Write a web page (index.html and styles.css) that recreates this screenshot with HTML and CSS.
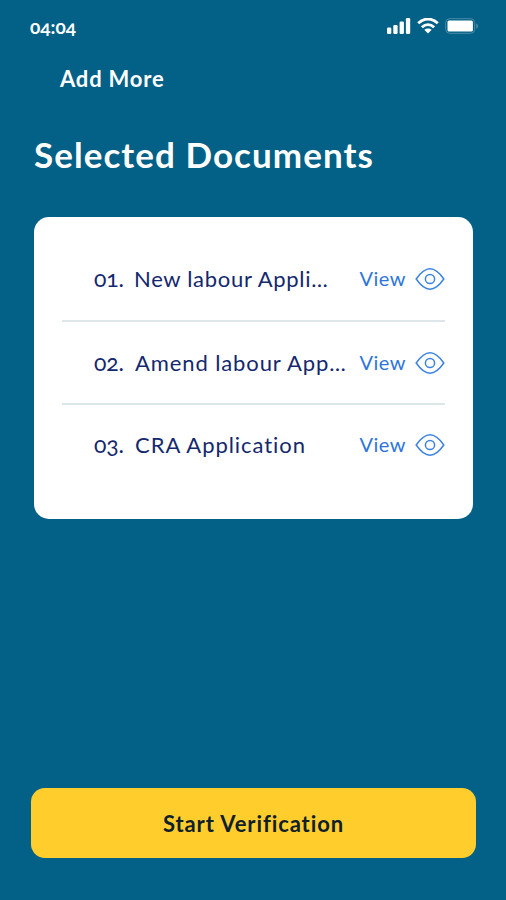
FILE: index.html
```html
<!DOCTYPE html>
<html lang="en">

	<head>
		<meta charset="UTF-8">
		<title>Selected Documents</title>
		<link rel="stylesheet" href="styles.css">
	</head>

	<body>
		<svg class="sprite" aria-hidden="true">
			<symbol id="eye" viewBox="0 0 30 24">
				<path d="M1.200 12C5.500 5.800 9.500 1.800 15 1.800s9.500 4 13.800 10.200C24.500 18.200 20.500 22.200 15 22.200S5.500 18.200 1.200 12z" />
				<circle cx="15" cy="12" r="4.600" />
			</symbol>
		</svg>

		<header class="status">
			<span class="time">04:04</span>
			<div class="status-icons">
				<svg class="signal" viewBox="0 0 24 16">
					<rect x="0" y="9.500" width="4.300" height="6.500" rx="1.200" />
					<rect x="6.300" y="7" width="4.300" height="9" rx="1.200" />
					<rect x="12.600" y="3.600" width="4.300" height="12.400" rx="1.200" />
					<rect x="18.900" y="0" width="4.300" height="16" rx="1.200" />
				</svg>
				<svg class="wifi" viewBox="0 0 22 16">
					<path class="arc" d="M1.200 5.300C7-0.300 15-0.300 20.800 5.300" />
					<path class="arc" d="M4.900 9.200C8.500 5.800 13.500 5.800 17.100 9.200" />
					<path d="M7.300 11.800c2.200-1.900 5.200-1.900 7.400 0L11 15.600z" />
				</svg>
				<svg class="battery" viewBox="0 0 34 16">
					<rect class="shell" x="0.700" y="0.700" width="29" height="14.600" rx="4" />
					<rect x="2.500" y="2.500" width="25.400" height="11" rx="1.500" />
					<path class="cap" d="M31.200 5.400c2.400 0.800 2.400 4.400 0 5.200z" />
				</svg>
			</div>
		</header>

		<a class="add-more">Add More</a>
		<h1>Selected Documents</h1>

		<ul class="card">
			<li>
				<span class="num">01.</span>
				<span class="name name-new">New labour Appli…</span>
				<a class="view"><span>View</span> <svg><use href="#eye" /></svg></a>
			</li>
			<li>
				<span class="num">02.</span>
				<span class="name name-amend">Amend labour App…</span>
				<a class="view"><span>View</span> <svg><use href="#eye" /></svg></a>
			</li>
			<li>
				<span class="num">03.</span>
				<span class="name name-cra">CRA Application</span>
				<a class="view"><span>View</span> <svg><use href="#eye" /></svg></a>
			</li>
		</ul>

		<button class="start">Start Verification</button>
	</body>

</html>
```
FILE: styles.css
```css
* {
	padding: 0;
	margin: 0;
	box-sizing: border-box;
}

body {
	display: flex;
	flex-direction: column;
	width: 506px;
	height: 900px;
	padding: 0 30px 42px;
	background: #036086;
	color: #fff;
	font-family: Lato, sans-serif;
	font-variant-numeric: oldstyle-nums;
}

.sprite {
	display: none;
}

.status {
	display: flex;
	justify-content: space-between;
	align-items: center;
	height: 52px;
	margin-right: -3px;
}

.time {
	font-size: 19px;
	font-weight: bold;
	line-height: 20px;
	padding-top: 2px;
}

.status-icons {
	display: flex;
	align-items: center;
	gap: 6px;
	fill: #fff;
}

.signal {
	width: 24px;
	height: 16px;
}

.wifi {
	width: 22px;
	height: 16px;
}

.battery {
	width: 34px;
	height: 16px;
}

.arc {
	fill: none;
	stroke: #fff;
	stroke-width: 2.9;
}

.shell {
	fill: none;
	stroke: #4a8ba7;
	stroke-width: 1;
}

.cap {
	fill: #4a8ba7;
}

.add-more {
	margin-left: 30px;
	font-size: 22px;
	font-weight: bold;
	line-height: 54px;
	letter-spacing: 0.8px;
}

h1 {
	margin-left: 4px;
	font-size: 35px;
	line-height: 40px;
	margin-top: 28px;
	letter-spacing: 1.05px;
}

.card {
	width: 439px;
	height: 302px;
	margin: 43px 0 0 4px;
	padding: 20px 28px 0;
	background: #fff;
	border-radius: 15px;
	list-style: none;
}

.card li {
	display: flex;
	align-items: center;
	height: 83px;
	padding-left: 32px;
	color: #14286e;
	font-size: 22px;
	line-height: 26px;
	white-space: nowrap;
}

.card li + li {
	border-top: 2px solid #dce5e9;
}

.card li:last-child {
	height: 81px;
}

.num {
	width: 41px;
	padding-bottom: 2px;
	font-size: 23px;
	letter-spacing: -0.2px;
}

.name {
	padding-top: 1px;
}

.name-new {
	margin-left: -1px;
	letter-spacing: 0.7px;
}

.name-amend {
	letter-spacing: 0.9px;
}

.name-cra {
	letter-spacing: 0.95px;
}

.view {
	display: flex;
	align-items: center;
	gap: 9px;
	margin-left: auto;
	color: #2d75dd;
	font-size: 20px;
	line-height: 22px;
	letter-spacing: 0.5px;
}

.view span {
	padding-bottom: 2px;
}

.view svg {
	width: 30px;
	height: 24px;
	fill: none;
	stroke: #3c83e4;
	stroke-width: 1.5;
}

.start {
	width: 445px;
	height: 70px;
	margin: auto 0 0 1px;
	border: none;
	border-radius: 14px;
	background: #ffce2d;
	color: #10202a;
	font-family: inherit;
	font-size: 22px;
	font-weight: bold;
	letter-spacing: 0.9px;
}
```
